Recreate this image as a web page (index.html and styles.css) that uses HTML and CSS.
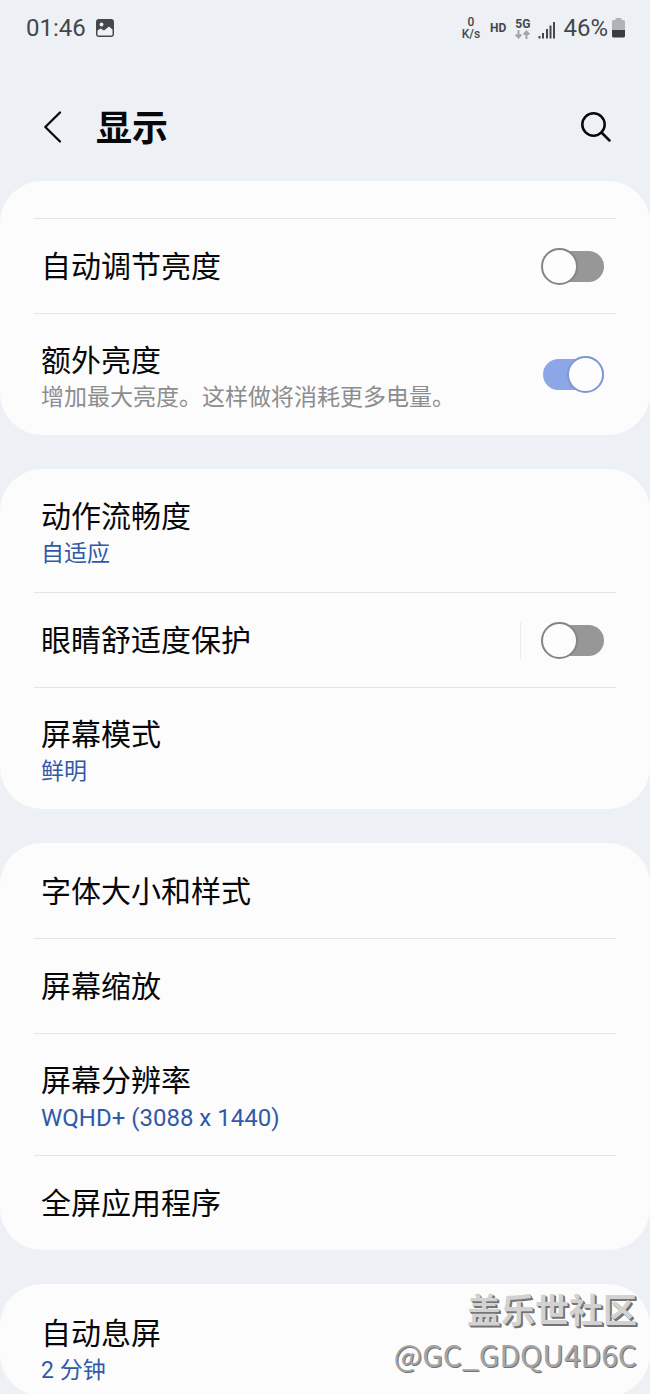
FILE: index.html
```
<!DOCTYPE html>
<html lang="zh-CN">
<head>
<meta charset="utf-8">
<meta name="viewport" content="width=device-width, initial-scale=1">
<title>显示</title>
<link rel="stylesheet" href="styles.css">
</head>
<body>
<div class="status">
  <div class="status-side">
    <span class="clock">01:46</span>
    <svg class="photo" width="18" height="18" viewBox="0 0 18 18" aria-hidden="true"><rect width="18" height="18" rx="3" fill="#44474b"/><circle cx="5.500" cy="5.500" r="1.900" fill="#edf0f4"/><path d="M1.500 11.500L4.500 9.500L8 11.500L10.500 9.500L13 7.500L16.500 10.500V15.500Q16.500 16.500 15.500 16.500H2.500Q1.500 16.500 1.500 15.500Z" fill="#edf0f4"/></svg>
  </div>
  <div class="status-side">
    <span class="speed"><span>0</span><span>K/s</span></span>
    <span class="hd">HD</span>
    <span class="network">
      <span>5G</span>
      <svg width="15" height="9" viewBox="0 0 15 9" fill="none" stroke="#a2a5a9" stroke-width="2" aria-hidden="true"><path d="M3.500 0V7M.7 4.500L3.500 7.500L6.300 4.500M11.500 9V2M8.700 4.500L11.500 1.500L14.300 4.500"/></svg>
    </span>
    <svg class="signal" width="18" height="18" viewBox="0 0 18 18" fill="#44474b" aria-hidden="true"><rect x="0.500" y="15" width="2" height="2.500"/><rect x="4" y="12" width="2" height="5.500"/><rect x="8" y="8" width="2" height="9.500"/><rect x="11.500" y="4.500" width="2" height="13"/><rect x="15" y="1" width="2" height="16.500"/></svg>
    <span class="percent">46%</span>
    <svg class="battery" width="13" height="20" viewBox="0 0 13 20" aria-hidden="true"><path d="M3.500 0H9.500V2H11.500Q13 2 13 3.500V12H0V3.500Q0 2 1.500 2H3.500Z" fill="#b1b4b7"/><path d="M0 12H13V18Q13 19.500 11.500 19.500H1.500Q0 19.500 0 18Z" fill="#393b3e"/></svg>
  </div>
</div>

<header class="header">
  <button class="icon-button" type="button" aria-label="返回"><svg width="20" height="34" viewBox="0 0 20 34" fill="none" stroke="#08080a" stroke-width="2.300" stroke-linecap="round" stroke-linejoin="round"><path d="M18 2.500L3.300 17L18 31.500"/></svg></button>
  <h1 class="title">显示</h1>
  <button class="icon-button" type="button" aria-label="搜索"><svg width="32" height="32" viewBox="0 0 32 32" fill="none" stroke="#08080a" stroke-width="2.500" stroke-linecap="round"><circle cx="13.500" cy="13.500" r="11.200"/><path d="M21.500 21.500L29.500 29.500"/></svg></button>
</header>

<main class="list">
  <section class="card card-scrolled">
    <div class="row row-ruled">
      <label class="name" for="auto">自动调节亮度</label>
      <input class="switch" id="auto" type="checkbox" role="switch">
    </div>
    <div class="row row-tall">
      <label class="text" for="extra"><span class="name">额外亮度</span><span class="note">增加最大亮度。这样做将消耗更多电量。</span></label>
      <input class="switch" id="extra" type="checkbox" role="switch" checked>
    </div>
  </section>

  <section class="card">
    <div class="row row-tall"><div class="text"><span class="name">动作流畅度</span><span class="note value">自适应</span></div></div>
    <div class="row">
      <label class="name" for="eye">眼睛舒适度保护</label>
      <span class="split"><input class="switch" id="eye" type="checkbox" role="switch"></span>
    </div>
    <div class="row row-tall"><div class="text"><span class="name">屏幕模式</span><span class="note value">鲜明</span></div></div>
  </section>

  <section class="card">
    <div class="row"><span class="name">字体大小和样式</span></div>
    <div class="row"><span class="name">屏幕缩放</span></div>
    <div class="row row-tall"><div class="text"><span class="name">屏幕分辨率</span><span class="note value latin">WQHD+ (3088 x 1440)</span></div></div>
    <div class="row"><span class="name">全屏应用程序</span></div>
  </section>

  <section class="card">
    <div class="row row-last"><div class="text"><span class="name">自动息屏</span><span class="note value">2 分钟</span></div></div>
  </section>
</main>

<div class="watermark"><span class="mark-name">盖乐世社区</span><span class="mark-user">@GC_GDQU4D6C</span></div>
</body>
</html>
```
FILE: styles.css
```
*,
*::before,
*::after {
  box-sizing: border-box;
}

body {
  display: flex;
  flex-direction: column;
  position: relative;
  height: 100vh;
  margin: 0;
  overflow: hidden;
  background: #edf0f4;
  color: #08080a;
  font-family: Roboto, "Noto Sans CJK SC", sans-serif;
}

.status {
  display: flex;
  justify-content: space-between;
  flex: none;
  height: 56px;
  padding: 0 25px 0 26px;
  color: #44474b;
}

.status-side {
  display: flex;
  align-items: center;
}

.clock,
.percent {
  font-size: 24px;
  line-height: 28px;
}

.photo {
  margin-left: 10px;
}

.speed,
.network {
  display: flex;
  flex-direction: column;
  align-items: center;
  font-size: 12px;
  font-weight: 500;
  line-height: 12px;
}

.hd {
  margin: 0 9px 0 10px;
  font-size: 12px;
  font-weight: 700;
}

.network {
  font-weight: 700;
}

.signal {
  margin: 4px 7px 0 8px;
}

.battery {
  margin-left: 4px;
}

.header {
  display: flex;
  align-items: center;
  flex: none;
  height: 125px;
  padding: 16px 38px 0 42px;
}

.icon-button {
  display: flex;
  padding: 0;
  border: 0;
  background: none;
}

.title {
  flex: 1;
  margin: 0 0 0 34px;
  padding-top: 4px;
  font-size: 36px;
  font-weight: 700;
  line-height: 48px;
}

.list {
  display: flex;
  flex-direction: column;
  flex: 1;
  gap: 34px;
  min-height: 0;
  overflow-y: auto;
  scrollbar-width: none;
}

.card {
  flex: none;
  padding: 0 34px;
  border-radius: 42px;
  background: #fcfcfd;
}

.card-scrolled {
  padding-top: 37px;
}

.row {
  display: flex;
  align-items: center;
  justify-content: space-between;
  min-height: 95px;
  padding: 0 12px 0 7px;
}

.row-tall {
  min-height: 123px;
}

.row + .row,
.row-ruled {
  border-top: 1px solid #e3e4e6;
}

.row + .row-tall {
  min-height: 122px;
}

.row-last {
  padding-top: 26px;
  padding-bottom: 10px;
}

.text {
  display: flex;
  flex-direction: column;
}

.name {
  padding-top: 2px;
  font-size: 30px;
  line-height: 44px;
}

.note {
  color: #8c8d8f;
  font-size: 23px;
  line-height: 30px;
}

.value {
  color: #3159a6;
}

.latin {
  font-size: 24px;
}

.switch {
  appearance: none;
  display: flex;
  align-items: center;
  flex: none;
  position: relative;
  width: 63px;
  height: 37px;
  margin: 0;
}

.switch::before {
  content: "";
  width: 61px;
  height: 31px;
  margin-left: 2px;
  border-radius: 16px;
  background: #979797;
}

.switch::after {
  content: "";
  position: absolute;
  top: 0;
  left: 0;
  width: 37px;
  height: 37px;
  border: 2px solid #858585;
  border-radius: 50%;
  background: #fdfdfd;
}

.switch:checked::before {
  background: #8da6e8;
}

.switch:checked::after {
  right: 0;
  left: auto;
  border-color: #7f97d4;
}

.split {
  display: flex;
  padding-left: 20px;
  border-left: 1px solid #ebecee;
}

.watermark {
  display: flex;
  flex-direction: column;
  align-items: flex-end;
  position: absolute;
  right: 13px;
  bottom: 18px;
  color: #d2d2d2;
  font-family: "Noto Sans CJK SC", sans-serif;
  text-shadow: 1px 1px 0 #747474, 2px 2px 0 #747474;
}

.mark-name {
  font-size: 34px;
  font-weight: 700;
  line-height: 46px;
}

.mark-user {
  color: #a4a4a4;
  font-size: 30px;
  line-height: 44px;
  text-shadow: 1px 1px 0 #747474;
}
```
